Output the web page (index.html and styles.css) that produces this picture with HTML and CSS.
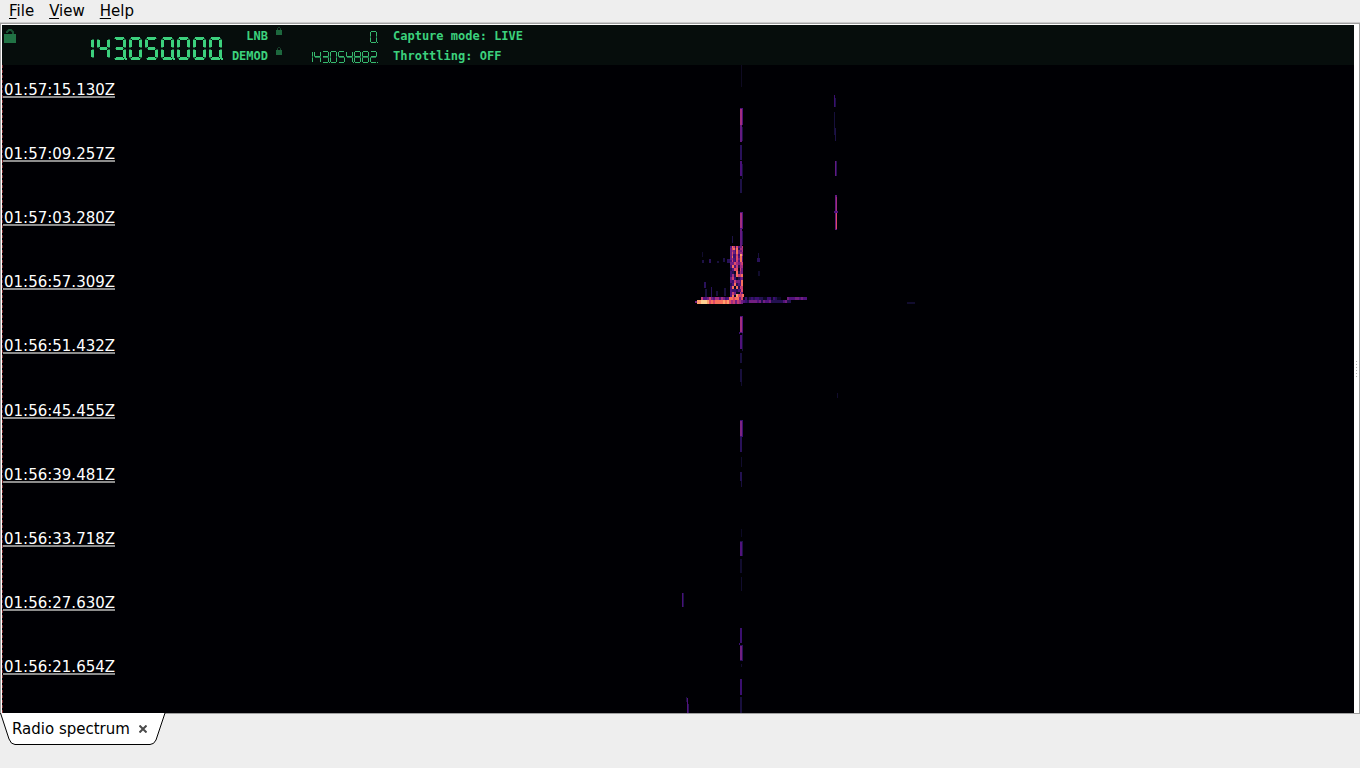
FILE: index.html
```html
<!DOCTYPE html>
<html lang="en">
<head>
<meta charset="utf-8">
<meta name="viewport" content="width=device-width, initial-scale=1">
<title>Radio spectrum</title>
<link rel="stylesheet" href="styles.css">
</head>
<body>
<nav class="menubar" aria-label="Main menu">
  <button type="button"><u>F</u>ile</button>
  <button type="button"><u>V</u>iew</button>
  <button type="button"><u>H</u>elp</button>
</nav>
<main class="frame">
  <section class="spectrum">
    <header class="status">
      <button type="button" class="lock lock-main" aria-label="Lock frequency">
        <svg width="12" height="14" viewBox="0 0 12 14"><path d="M0 5h12v9H0z" fill="#217345"/><path d="M3 4V3l2-2h2l2 2v2" fill="none" stroke="#1a5435" stroke-width="2"/></svg>
      </button>
      <output class="lcd lcd-large" data-value="143.050.000."></output>
      <div class="names"><span>LNB</span><span>DEMOD</span></div>
      <div class="locks">
        <button type="button" class="lock" aria-label="Lock LNB"><svg width="6" height="8" viewBox="0 0 6 8"><path d="M0 3h6v5H0z" fill="#1d683e"/><path d="M1.500 3V1.500l1-1h1l1 1V3" fill="none" stroke="#1d4a33"/></svg></button>
        <button type="button" class="lock" aria-label="Lock demodulator"><svg width="6" height="8" viewBox="0 0 6 8"><path d="M0 3h6v5H0z" fill="#1d683e"/><path d="M1.500 3V1.500l1-1h1l1 1V3" fill="none" stroke="#1d4a33"/></svg></button>
      </div>
      <div class="values">
        <output class="lcd lcd-small" data-value="0."></output>
        <output class="lcd lcd-small" data-value="143.054.882."></output>
      </div>
      <div class="modes"><span>Capture mode: LIVE</span><span>Throttling: OFF</span></div>
    </header>
    <div class="waterfall">
      <svg class="traces" viewBox="3 65 1351 648" preserveAspectRatio="none" shape-rendering="crispEdges" role="img" aria-label="Spectrum waterfall"></svg>
      <ol class="times">
        <li>01:57:15.130Z</li>
        <li>01:57:09.257Z</li>
        <li>01:57:03.280Z</li>
        <li>01:56:57.309Z</li>
        <li>01:56:51.432Z</li>
        <li>01:56:45.455Z</li>
        <li>01:56:39.481Z</li>
        <li>01:56:33.718Z</li>
        <li>01:56:27.630Z</li>
        <li>01:56:21.654Z</li>
      </ol>
    </div>
  </section>
  <div class="splitter"><i></i><i></i><i></i><i></i><i></i><i></i></div>
</main>
<footer class="tabs">
  <div class="tab">
    <svg class="tab-shape" width="166" height="32" viewBox="0 0 166 32" aria-hidden="true"><path d="M0.500 0L9 26Q11 31.500 15 31.500H150Q154 31.500 156 27L165 0" fill="#fff" stroke="#000"/></svg>
    <button type="button" class="tab-name">Radio spectrum</button>
    <button type="button" class="tab-close" aria-label="Close tab"><svg width="8" height="8" viewBox="0 0 8 8"><path d="M0.500 0.500l7 7M7.500 0.500l-7 7" stroke="#4a4a4a" stroke-width="2"/></svg></button>
  </div>
</footer>
<script src="app.js"></script>
</body>
</html>
```
FILE: styles.css
```css
* { box-sizing: border-box; }
body {
  margin: 0;
  min-height: 100vh;
  display: flex;
  flex-direction: column;
  background: #eeeeee;
  color: #000;
  font: 15px/18px "DejaVu Sans", sans-serif;
}
button {
  margin: 0;
  padding: 0;
  border: 0;
  background: none;
  color: inherit;
  font: inherit;
}
svg { display: block; }
.menubar {
  display: flex;
  gap: 15px;
  height: 23px;
  padding: 2px 9px;
  border-bottom: 1px solid #cccccc;
}
.menubar u { text-underline-offset: 2px; text-decoration-thickness: 1px; }
.frame {
  flex: 1;
  display: flex;
  border: 1px solid #a0a0a0;
  background: #fff;
  padding: 1px 0 0 1px;
}
.spectrum {
  flex: 1;
  display: flex;
  flex-direction: column;
  background: #000004;
}
.status {
  display: flex;
  height: 40px;
  background: #060d0c;
  color: #3cd17d;
  font: bold 12px/20px "DejaVu Sans Mono", monospace;
}
.lock-main { padding: 4px 0 0 2px; align-self: flex-start; }
.lcd { display: flex; justify-content: flex-end; flex: none; }
.lcd-large { width: 209px; padding-top: 12px; }
.names { width: 43px; display: flex; flex-direction: column; text-align: right; }
.names, .modes { padding-top: 1px; }
.locks { padding: 2px 0 0 8px; }
.locks .lock { display: block; height: 20px; }
.locks svg { margin-bottom: 12px; }
.values { width: 96px; padding-top: 6px; display: flex; flex-direction: column; }
.lcd-small { height: 20px; }
.modes { display: flex; flex-direction: column; padding-left: 15px; }
.waterfall { flex: 1; display: grid; border-left: 1px dashed #7c2a2e; }
.traces, .times { grid-area: 1 / 1; }
.traces { width: 100%; height: 100%; min-height: 0; }
.times {
  display: flex;
  flex-direction: column;
  justify-content: space-between;
  align-items: flex-start;
  margin: 0;
  padding: 15px 0 38px;
  list-style: none;
  color: #fff;
}
.times li { height: 18px; padding-left: 1px; border-bottom: 2px solid #8c8c8c; line-height: 20px; }
.splitter {
  width: 5px;
  display: flex;
  flex-direction: column;
  align-items: center;
  justify-content: center;
  gap: 2px;
}
.splitter i { width: 1px; height: 1px; background: #b0b0b0; }
.tabs { height: 54px; }
.tab {
  position: relative;
  width: 166px;
  height: 32px;
  display: flex;
  align-items: center;
  gap: 9px;
  padding: 0 0 2px 12px;
}
.tab-shape { position: absolute; left: 0; top: -1px; }
.tab-name, .tab-close { position: relative; }
```
FILE: app.js
```js
const NS = "http://www.w3.org/2000/svg";

function add(parent, name, attrs) {
  const el = document.createElementNS(NS, name);
  for (const key in attrs) el.setAttribute(key, attrs[key]);
  parent.appendChild(el);
  return el;
}

/* Segment displays: each digit lists its lit bars. */
const LIT = {
  0: "abcdef", 1: "bc", 2: "abged", 3: "abgcd", 4: "fgbc",
  5: "afgcd", 6: "afgedc", 7: "abc", 8: "abcdefg", 9: "abcdfg"
};
const LARGE = {
  width: 16, height: 26, color: "#3cd17d", dim: "#1d6840",
  bars: {
    a: [[2, 0, 9, 2], [3, 2, 7, 1]], g: [[3, 10, 7, 3]], d: [[3, 20, 7, 1], [2, 21, 9, 2]],
    f: [[0, 3, 3, 7]], b: [[10, 3, 3, 7]],
    e: [[0, 13, 3, 7]], c: [[10, 13, 3, 7]]
  },
  ends: {
    a: [[1, 1, 11, 1]], g: [[2, 11, 9, 1]], d: [[1, 21, 11, 1]],
    f: [[0, 2, 2, 9]], b: [[11, 2, 2, 9]], e: [[0, 12, 2, 9]], c: [[11, 12, 2, 9]]
  },
  dot: [[11, 20, 2, 2], [12, 21, 2, 2], [13, 22, 1, 1]]
};
const SMALL = {
  width: 8, height: 13, color: "#36b96f", dim: "#23754a",
  bars: {
    a: [[1, 0, 5, 1]], g: [[1, 5, 5, 1]], d: [[1, 11, 5, 1]],
    f: [[0, 1, 1, 4]], b: [[6, 1, 1, 4]], e: [[0, 7, 1, 4]], c: [[6, 7, 1, 4]]
  },
  ends: {
    a: [], g: [[1, 6, 5, 1]], d: [],
    f: [[0, 1, 1, 5]], b: [[6, 1, 1, 5]], e: [[0, 6, 1, 5]], c: [[6, 6, 1, 5]]
  },
  dot: [[7, 11, 1, 1]]
};
function bars(svg, list, fill) {
  for (const [x, y, width, height] of list) add(svg, "rect", { x, y, width, height, fill });
}
document.querySelectorAll(".lcd").forEach(lcd => {
  const type = lcd.classList.contains("lcd-large") ? LARGE : SMALL;
  const value = lcd.dataset.value;
  lcd.setAttribute("aria-label", value);
  (value.match(/\d\.?/g) || []).forEach(cell => {
    const svg = add(lcd, "svg", { width: type.width, height: type.height, "shape-rendering": "crispEdges" });
    for (const bar of LIT[cell[0]]) {
      bars(svg, type.ends[bar], type.dim);
    }
    for (const bar of LIT[cell[0]]) {
      bars(svg, type.bars[bar], type.color);
    }
    if (cell[1]) bars(svg, type.dot, type.color);
  });
});

/* Waterfall: x, y, width, height, colour */
const plot = document.querySelector(".traces");
const put = (x, y, width, height, fill) => add(plot, "rect", { x, y, width, height, fill });
[
  [741, 65, 1, 22, "#0e0a22"],
  [740, 108, 3, 17, "#4d1279"], [740, 109, 2, 16, "#a32d80"],
  [740, 125, 2, 17, "#641a80"], [742, 127, 1, 14, "#1d1147"], [740, 145, 2, 15, "#29115a"],
  [740, 161, 2, 15, "#4a1079"], [742, 164, 1, 15, "#180f3d"], [740, 179, 2, 14, "#1d1147"],
  [740, 212, 3, 17, "#4d1279"], [740, 213, 2, 15, "#a32d80"], [740, 229, 2, 17, "#641a80"],
  [742, 231, 1, 14, "#29115a"],
  [834, 95, 1, 12, "#3b0f70"], [835, 98, 1, 9, "#1d1147"], [834, 112, 1, 23, "#160f3b"], [835, 128, 1, 13, "#1d1147"],
  [835, 161, 1, 15, "#641a80"], [836, 161, 1, 15, "#29115a"],
  [835, 195, 2, 16, "#641a80"], [836, 197, 1, 14, "#a32d80"],
  [834, 211, 4, 2, "#51127c"], [835, 213, 2, 17, "#641a80"], [836, 213, 1, 16, "#de4968"],
  [740, 316, 3, 17, "#4d1279"], [740, 317, 2, 15, "#a32d80"], [739, 332, 1, 2, "#3b0f70"],
  [740, 335, 2, 14, "#51127c"], [742, 333, 1, 18, "#180f3d"],
  [740, 353, 2, 10, "#180f3d"], [740, 369, 2, 13, "#180f3d"], [741, 382, 1, 4, "#110c2e"],
  [837, 393, 1, 5, "#110c2e"],
  [740, 420, 3, 17, "#3b0f70"], [740, 421, 2, 15, "#7e2482"], [740, 437, 2, 15, "#29115a"],
  [741, 457, 1, 10, "#110c2e"], [740, 472, 2, 9, "#231151"], [741, 481, 1, 6, "#180f3d"],
  [741, 529, 1, 8, "#0c0926"], [740, 541, 3, 15, "#1d1147"], [740, 542, 2, 14, "#51127c"],
  [740, 559, 2, 14, "#110c2e"], [741, 577, 1, 14, "#110c2e"],
  [682, 593, 1, 14, "#4a1079"], [683, 593, 1, 14, "#1d1147"],
  [740, 628, 2, 15, "#3b0f70"], [739, 643, 1, 2, "#3b0f70"],
  [740, 645, 3, 16, "#29115a"], [740, 646, 2, 14, "#721f81"], [741, 664, 1, 3, "#110c2e"],
  [740, 679, 2, 16, "#3b0f70"], [740, 697, 2, 16, "#180f3d"],
  [686, 697, 1, 5, "#180f3d"], [687, 698, 1, 15, "#51127c"], [688, 704, 1, 9, "#29115a"],
  [702, 252, 1, 5, "#110c2e"], [702, 260, 2, 3, "#1d1147"], [709, 259, 2, 4, "#29115a"],
  [717, 261, 2, 2, "#180f3d"], [723, 258, 2, 4, "#1d1147"], [727, 259, 3, 4, "#29115a"],
  [732, 236, 1, 7, "#1d1147"], [758, 253, 1, 5, "#180f3d"], [757, 258, 3, 4, "#29115a"],
  [758, 271, 2, 5, "#110c2e"], [704, 282, 2, 6, "#29115a"], [705, 289, 2, 8, "#180f3d"],
  [711, 287, 1, 10, "#29115a"], [716, 291, 2, 5, "#180f3d"], [724, 288, 2, 8, "#180f3d"],
  [907, 302, 8, 2, "#110c2e"]
].forEach(r => put(...r));

/* Meteor echo: column of noise and the head echo along its foot */
const HEAT = ["#0b0724", "#231151", "#3b0f70", "#51127c", "#721f81", "#a32d80", "#c83e73", "#de4968", "#f7705c", "#fe9f6d", "#fecf92"];
let seed = 7;
function random() {
  seed = (seed * 16807) % 2147483647;
  return seed / 2147483647;
}
function speck(x, y, width, height, low, high) {
  put(x, y, width, height, HEAT[Math.floor(low + random() * (high - low + 1))]);
}
for (let y = 246; y < 262; y += 2) {
  speck(730, y, 2, 2, 3, 4); speck(732, y, 1, 2, 5, 8); speck(733, y, 2, 2, y < 250 ? 6 : 2, y < 250 ? 8 : 5);
  speck(735, y, 1, 2, 1, 4); speck(736, y, 2, 2, 5, 8);
  speck(738, y, 2, 2, 1, 4); speck(740, y, 2, 2, y > 252 ? 7 : 4, y > 252 ? 9 : 6); speck(742, y, 1, 2, 3, 6);
}
for (let y = 262; y < 297; y += 3) {
  speck(730, y, 2, 3, 0, 4);
  for (let x = 732; x < 740; x += 2) speck(x, y, 2, 3, 0, x < 737 ? 8 : 6);
  speck(740, y, 1, 3, 3, 6); speck(741, y, 2, 3, 4, 8);
}
for (let x = 736; x < 743; x += 2) speck(x, 294, 2, 3, 6, 9);
for (let x = 701; x < 743; x += 2) speck(x, 297, 2, 3, x < 728 ? 2 : 4, x < 728 ? 6 : 8);
put(695, 301, 4, 2, "#721f81");
for (let x = 697; x < 731; x += 2) speck(x, 300, 2, 4, x < 709 ? 9 : 7, x < 709 ? 10 : 9);
for (let x = 731; x < 743; x += 2) speck(x, 300, 2, 4, 4, 7);
for (let x = 743; x < 791; x += 2) speck(x, 300, 2, 3, 1, 4);
for (let x = 743; x < 780; x += 2) speck(x, 297, 2, 3, 0, 2);
for (let x = 787; x < 807; x += 2) speck(x, 297, 2, 3, 3, 4);
```
